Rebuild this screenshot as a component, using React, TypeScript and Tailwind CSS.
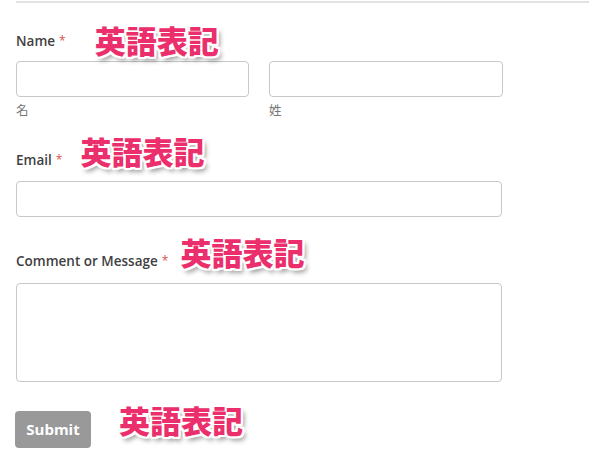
import type { ReactNode } from 'react';

const note =
  "font-['Noto_Sans_CJK_JP',sans-serif] font-black text-[31px] leading-none text-[#ea2f6c] whitespace-nowrap [text-shadow:-2px_-2px_0_#fff,2px_-2px_0_#fff,-2px_2px_0_#fff,2px_2px_0_#fff,0_-2px_0_#fff,0_2px_0_#fff,-2px_0_0_#fff,2px_0_0_#fff,3px_4px_5px_rgba(0,0,0,0.45)]";

// 英語表記 annotation floating next to the field
const Note = ({ className }: { className: string }) => (
  <span className={`${note} relative ${className}`}>英語表記</span>
);

const Label = ({ text, children }: { text: string; children?: ReactNode }) => (
  <div className="flex items-center h-5">
    <span className="text-[13.5px] font-semibold text-[#3f3f3f]">{text}</span>
    <span className="ml-1 text-[12px] text-[#d9534f]">*</span>
    {children}
  </div>
);

const box = 'block h-[36px] rounded-[4px] border border-[#c8c8c8] bg-white';

export default function App() {
  return (
    <div className="w-[589px] h-[460px] bg-white overflow-hidden font-['Open_Sans','Noto_Sans_CJK_JP',sans-serif]">
      <div className="mt-px ml-4 border-t-2 border-[#e2e2e2]" />

      <div className="px-4 pt-[28px]">
        <Label text="Name">
          <Note className="ml-[29px] -top-[2px]" />
        </Label>
        <div className="flex gap-5 mt-[10px]">
          <div className="w-[233px]">
            <div className={`${box} w-full`} />
            <div className="mt-[4px] text-[12.5px] text-[#777] leading-5">名</div>
          </div>
          <div className="w-[234px]">
            <div className={`${box} w-full`} />
            <div className="mt-[4px] text-[12.5px] text-[#777] leading-5">姓</div>
          </div>
        </div>

        <div className="mt-[29px]">
          <Label text="Email">
            <Note className="ml-[18px] -top-[10px]" />
          </Label>
          <div className={`${box} w-[486px] mt-[11px]`} />
        </div>

        <div className="mt-[34px]">
          <Label text="Comment or Message">
            <Note className="ml-[12px] -top-[10px]" />
          </Label>
          <div className="mt-[12px] w-[486px] h-[99px] rounded-[4px] border border-[#c8c8c8] bg-white" />
        </div>

        <div className="mt-[29px] flex items-center">
          <button className="-ml-px w-[76px] h-[37px] rounded-[4px] bg-[#999] text-white text-[15px] font-bold">
            Submit
          </button>
          <Note className="ml-[28px] -top-[10px]" />
        </div>
      </div>
    </div>
  );
}
